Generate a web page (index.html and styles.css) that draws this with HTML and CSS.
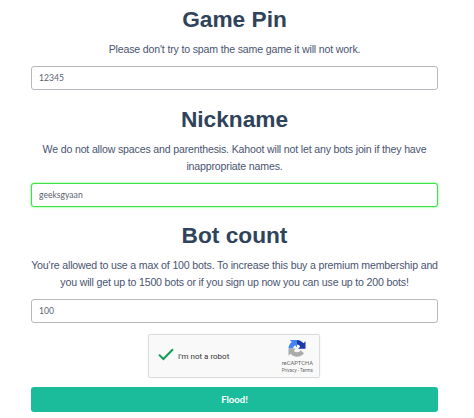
FILE: index.html
```
<!DOCTYPE html>
<html lang="en">
<head>
  <meta charset="UTF-8" />
  <meta name="viewport" content="width=device-width, initial-scale=1.0" />
  <title>Kahoot Flood</title>
  <link rel="stylesheet" href="styles.css">
</head>
<body>
<form class="container">
  <div class="field">
    <h1>Game Pin</h1>
    <p>Please don't try to spam the same game it will not work.</p>
    <input type="text" id="pin" value="12345" />
  </div>
  <div class="field nickname">
    <h1>Nickname</h1>
    <p>We do not allow spaces and parenthesis. Kahoot will not let any bots join if they have<br>inappropriate names.</p>
    <input type="text" id="nickname" class="valid" value="geeksgyaan" spellcheck="false" />
  </div>
  <div class="field">
    <h1>Bot count</h1>
    <p>You're allowed to use a max of 100 bots. To increase this buy a premium membership and<br>you will get up to 1500 bots or if you sign up now you can use up to 200 bots!</p>
    <input type="text" id="count" value="100" />
  </div>
  <div class="captcha">
    <svg class="check" viewBox="0 0 16 13">
      <path d="M1 6.6 L5.4 11 L15 1.2" fill="none" stroke="#0f9d58" stroke-width="2" />
    </svg>
    <span class="captcha-label">I'm not a robot</span>
    <div class="captcha-brand">
      <svg class="captcha-logo" viewBox="0 0 64 64">
        <path fill="#1c3aa9" d="M64 32 V5 L56.500 12.500 A32 32 0 0 0 32 0 V17 A16 16 0 0 1 44.500 24.500 L36 33 H64 Z" />
        <path fill="#4285f4" d="M32 0 H5 L12.500 7.500 A32 32 0 0 0 0 32 H17 A16 16 0 0 1 24.500 19.500 L32 28 Z" />
        <path fill="#ababab" d="M0 32 V59 L7.500 51.500 A32 32 0 0 0 58 50 L46 39 A16 16 0 0 1 20 40 L28 32 Z" />
      </svg>
      <span class="captcha-name">reCAPTCHA</span>
      <span class="captcha-links">Privacy - Terms</span>
    </div>
  </div>
  <button type="button">Flood!</button>
</form>
</body>
</html>
```

FILE: styles.css
```
* {
  box-sizing: border-box;
}
html, body {
  margin: 0;
  padding: 0;
  font-family: "Liberation Sans", Arial, sans-serif;
  background-color: #fff;
  color: #4a5470;
}
.container {
  width: 407px;
  margin: 0 0 0 31px;
  padding-top: 5px;
}
.field {
  margin-bottom: 15px;
  text-align: center;
}
.field.nickname {
  margin-bottom: 14px;
}
h1 {
  margin: 0 0 7px;
  font-size: 22.7px;
  line-height: 29px;
  color: #2f435a;
}
p {
  margin: 0 -10px 8px;
  font-size: 10.6px;
  letter-spacing: -0.17px;
  line-height: 17px;
  white-space: nowrap;
}
input {
  display: block;
  width: 100%;
  height: 24px;
  padding: 0 7px;
  border: 1px solid #b5b9be;
  border-radius: 3px;
  font-family: Lato, sans-serif;
  font-size: 8.6px;
  color: #5a6270;
  background: #fff;
  outline: none;
}
input.valid {
  border-color: #3fe04a;
  box-shadow: 0 0 2px #33ff33;
}
.captcha {
  display: flex;
  align-items: center;
  width: 172px;
  height: 44px;
  margin: -4px auto 9px 117px;
  padding: 0 6px 0 9px;
  background: #f9f9f9;
  border: 1px solid #dcdcdc;
  border-radius: 2px;
  box-shadow: 0 0 2px rgba(0,0,0,0.08);
}
.check {
  width: 16px;
  height: 13px;
  margin-top: -3px;
}
.captcha-label {
  margin-left: 4px;
  font-family: Roboto, sans-serif;
  font-size: 8px;
  color: #333;
}
.captcha-brand {
  display: flex;
  flex-direction: column;
  align-items: center;
  margin-left: auto;
  padding-top: 2px;
  font-family: Roboto, sans-serif;
  color: #666;
  white-space: nowrap;
}
.captcha-logo {
  width: 18px;
  height: 17px;
}
.captcha-name {
  margin-top: 3px;
  font-size: 5.8px;
  line-height: 7px;
}
.captcha-links {
  font-size: 4.6px;
  line-height: 7px;
}
button {
  display: block;
  width: 100%;
  height: 25px;
  padding: 0;
  border: none;
  border-radius: 3px;
  background-color: #1abc9c;
  font-family: Lato, sans-serif;
  font-size: 9.5px;
  font-weight: bold;
  color: white;
  cursor: pointer;
}
```
